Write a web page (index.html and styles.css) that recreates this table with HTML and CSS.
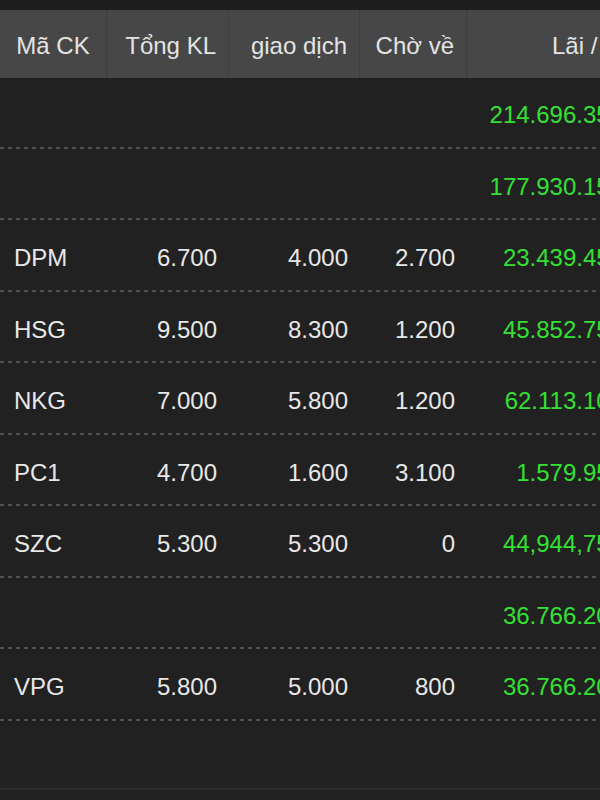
FILE: index.html
```html
<!DOCTYPE html>
<html lang="vi">
<head>
  <meta charset="UTF-8">
  <meta name="viewport" content="width=device-width, initial-scale=1.0">
  <title>Danh mục</title>
  <link rel="stylesheet" href="styles.css">
</head>
<body>
  <div class="screen">
    <div class="top-bar"></div>
    <div class="table">
      <!-- Header -->
      <div class="row head">
        <div class="cell code">Mã CK</div>
        <div class="cell">Tổng KL</div>
        <div class="cell">giao dịch</div>
        <div class="cell">Chờ về</div>
        <div class="cell">Lãi / Lỗ</div>
      </div>

      <!-- Totals -->
      <div class="row">
        <div class="cell code"></div>
        <div class="cell"></div>
        <div class="cell"></div>
        <div class="cell"></div>
        <div class="cell up">214.696.350</div>
      </div>
      <div class="row">
        <div class="cell code"></div>
        <div class="cell"></div>
        <div class="cell"></div>
        <div class="cell"></div>
        <div class="cell up">177.930.150</div>
      </div>

      <!-- Stocks -->
      <div class="row">
        <div class="cell code">DPM</div>
        <div class="cell">6.700</div>
        <div class="cell">4.000</div>
        <div class="cell">2.700</div>
        <div class="cell up">23.439.450</div>
      </div>
      <div class="row">
        <div class="cell code">HSG</div>
        <div class="cell">9.500</div>
        <div class="cell">8.300</div>
        <div class="cell">1.200</div>
        <div class="cell up">45.852.750</div>
      </div>
      <div class="row">
        <div class="cell code">NKG</div>
        <div class="cell">7.000</div>
        <div class="cell">5.800</div>
        <div class="cell">1.200</div>
        <div class="cell up">62.113.100</div>
      </div>
      <div class="row">
        <div class="cell code">PC1</div>
        <div class="cell">4.700</div>
        <div class="cell">1.600</div>
        <div class="cell">3.100</div>
        <div class="cell up">1.579.950</div>
      </div>
      <div class="row">
        <div class="cell code">SZC</div>
        <div class="cell">5.300</div>
        <div class="cell">5.300</div>
        <div class="cell">0</div>
        <div class="cell up">44,944,750</div>
      </div>
      <div class="row">
        <div class="cell code"></div>
        <div class="cell"></div>
        <div class="cell"></div>
        <div class="cell"></div>
        <div class="cell up">36.766.200</div>
      </div>
      <div class="row">
        <div class="cell code">VPG</div>
        <div class="cell">5.800</div>
        <div class="cell">5.000</div>
        <div class="cell">800</div>
        <div class="cell up">36.766.200</div>
      </div>
    </div>
    <div class="footer"></div>
  </div>
</body>
</html>
```

FILE: styles.css
```css
/* General Styling */
html {
  font-family: "Liberation Sans", Arial, sans-serif;
}
body {
  margin: 0;
  background: #212121;
  color: #e8e8e8;
}
.screen {
  width: 600px;
  height: 800px;
  overflow: hidden;
  display: flex;
  flex-direction: column;
}
.top-bar {
  height: 10px;
  flex: 0 0 auto;
  background: #1d1d1d;
}
.table {
  width: 635px;
  flex: 0 0 auto;
}
.row {
  display: grid;
  grid-template-columns: 107px 122px 131px 107px 168px;
  height: 71.5px;
  align-items: center;
  font-size: 24px;
  background-image: repeating-linear-gradient(90deg, #525252 0 4px, transparent 4px 8px);
  background-size: 100% 2px;
  background-position: 0 calc(100% - 1px);
  background-repeat: no-repeat;
}
.row.head {
  height: 68px;
  background: #474747;
  color: #e4e4e4;
  align-items: stretch;
}
.cell {
  text-align: right;
  padding: 3px 12px 0 0;
  white-space: nowrap;
}
.cell.code {
  text-align: left;
  padding: 3px 0 0 14px;
}
.head .cell {
  display: flex;
  align-items: center;
  justify-content: flex-end;
  border-right: 1px solid #3e3e3e;
  padding: 3px 12px 0 0;
}
.head .cell.code {
  justify-content: center;
  padding: 3px 0 0 0;
}
.head .cell:last-child {
  justify-content: flex-start;
  padding-left: 85px;
  border-right: none;
}
.up {
  color: #35e035;
}
.footer {
  flex: 1 1 auto;
  border-bottom: 2px solid #2e2e2e;
  margin-bottom: 10px;
}
```
